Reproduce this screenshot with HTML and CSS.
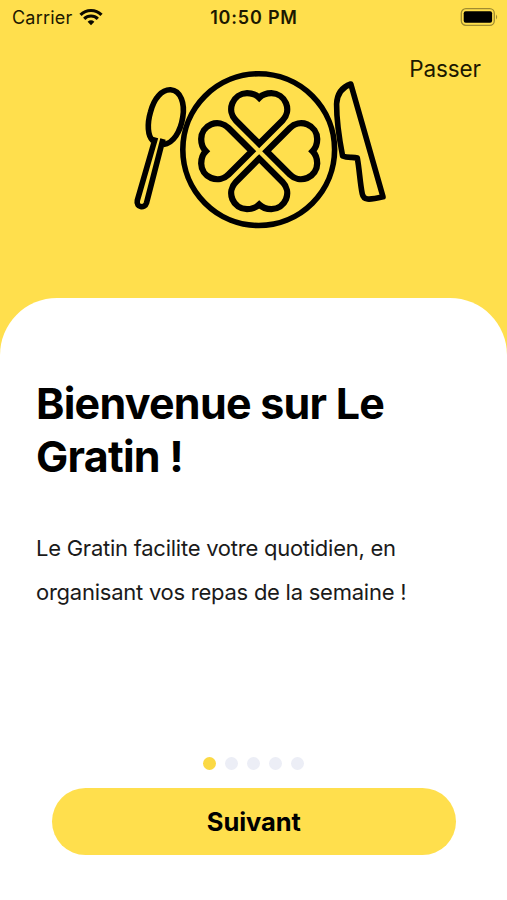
FILE: index.html
```
<!DOCTYPE html>
<html lang="fr">
<head>
  <meta charset="UTF-8" />
  <meta name="viewport" content="width=device-width, initial-scale=1.0"/>
  <title>Le Gratin</title>
  <link rel="stylesheet" href="styles.css">
</head>
<body>
  <div class="screen">
    <div class="status-bar">
      <div class="carrier">
        <span>Carrier</span>
        <svg width="24" height="18" viewBox="0 0 24 18">
          <g fill="none" stroke="#0c0a00" stroke-width="3.2">
            <path d="M1.5 6.8 A15 15 0 0 1 22.5 6.8" />
            <path d="M5.2 10.8 A9.6 9.6 0 0 1 18.8 10.8" />
          </g>
          <path d="M12 17.2 L8.6 13.8 A5.2 5.2 0 0 1 15.4 13.8 Z" fill="#0c0a00" />
        </svg>
      </div>
      <div class="time">10:50 PM</div>
      <div class="battery">
        <svg width="38" height="18" viewBox="0 0 38 18">
          <rect x="1.3" y="0.7" width="33" height="16.6" rx="4.6" fill="none" stroke="#a08c30" stroke-width="1.3" />
          <rect x="3.7" y="3.2" width="28.4" height="11.6" rx="2" fill="#000" />
          <path d="M36 6.6 Q38.4 9 36 11.4 Z" fill="#a08c30" />
        </svg>
      </div>
    </div>

    <div class="hero">
      <svg class="logo" width="260" height="170" viewBox="130 64 260 170">
        <defs>
          <path id="heart" d="M251.8 151.2 L228.5 127.900 A16 16 0 0 0 201.200 139 C201.200 143.800 202.600 148 205.800 151.2 C202.600 154.400 201.200 158.600 201.200 163.400 A16 16 0 0 0 228.5 174.500 Z" />
        </defs>
        <g fill="none" stroke="#000" stroke-width="5.6">
          <!-- plate -->
          <circle cx="258.7" cy="149.6" r="75.9" />
          <!-- clover -->
          <g stroke-width="6.3">
            <use href="#heart" />
            <use href="#heart" transform="rotate(90 259.2 151.2)" />
            <use href="#heart" transform="rotate(180 259.2 151.2)" />
            <use href="#heart" transform="rotate(270 259.2 151.2)" />
          </g>
          <!-- spoon -->
          <path d="M153 141 C147.500 136 147 124 150.500 112 C154 98 162 89.500 170.500 89.800 C181 90.500 185 104 182.800 117 C180.500 132 173 143.500 163.500 144.500" />
          <path d="M155.500 137.500 L137.300 200.500 C135.800 207.500 144.800 208.800 146.500 203 L163 139" />
          <!-- knife -->
          <path stroke-linejoin="round" d="M350.800 84 C341 87.500 337 95 336.600 104 C336.500 122 339.300 139 342.600 156 C348 158.500 353 156.500 357.300 158 C359.500 170 360 183 362.300 194 C363.500 200 368 200.500 383 196.800 Z" />
        </g>
      </svg>
      <a class="skip">Passer</a>
    </div>

    <div class="sheet">
      <h1>Bienvenue sur Le Gratin !</h1>
      <p>Le Gratin facilite votre quotidien, en organisant vos repas de la semaine !</p>
      <div class="dots">
        <span class="dot active"></span>
        <span class="dot"></span>
        <span class="dot"></span>
        <span class="dot"></span>
        <span class="dot"></span>
      </div>
      <button class="next-btn">Suivant</button>
    </div>
  </div>
</body>
</html>
```
FILE: styles.css
```
* {
  box-sizing: border-box;
}

body {
  margin: 0;
  font-family: Inter, "Liberation Sans", sans-serif;
  background: #ffdf4d;
  color: #000;
}

.screen {
  height: 900px;
  display: flex;
  flex-direction: column;
  overflow: hidden;
}

.status-bar {
  height: 34px;
  padding: 0 9px 0 12px;
  display: grid;
  grid-template-columns: 1fr auto 1fr;
  align-items: center;
  font-size: 18px;
  color: #1c1800;
}

.carrier {
  display: flex;
  align-items: center;
  gap: 7px;
  letter-spacing: 0.2px;
}

.time {
  margin-right: 2px;
  font-weight: 600;
  letter-spacing: 0.8px;
}

.battery {
  display: flex;
  justify-content: flex-end;
}

.hero {
  position: relative;
  height: 264px;
  padding: 30px 0 0 130px;
}

.logo {
  display: block;
}

.skip {
  position: absolute;
  top: 21px;
  right: 26px;
  font-size: 22.5px;
  line-height: 28px;
  letter-spacing: -0.1px;
  color: #1c1800;
}

.sheet {
  flex: 1;
  padding: 79px 36px 0;
  background: #fff;
  border-radius: 57px 57px 0 0;
  display: flex;
  flex-direction: column;
}

h1 {
  margin: 0;
  font-size: 43px;
  font-weight: 700;
  line-height: 53px;
  letter-spacing: -0.75px;
}

p {
  margin: 43px 0 0;
  font-size: 22px;
  line-height: 44px;
  letter-spacing: -0.25px;
  color: #1a1a1a;
}

.dots {
  margin-top: 142.5px;
  display: flex;
  justify-content: center;
  gap: 9.2px;
}

.dot {
  width: 13px;
  height: 13px;
  border-radius: 50%;
  background: #eceef6;
}

.dot.active {
  background: #fbd944;
}

.next-btn {
  margin: 18.5px 15px 0 15.5px;
  height: 67px;
  border: none;
  border-radius: 34px;
  background: #ffdf4d;
  color: #000;
  font-family: inherit;
  font-size: 25.5px;
  font-weight: 700;
  letter-spacing: -0.1px;
  cursor: pointer;
}
```
